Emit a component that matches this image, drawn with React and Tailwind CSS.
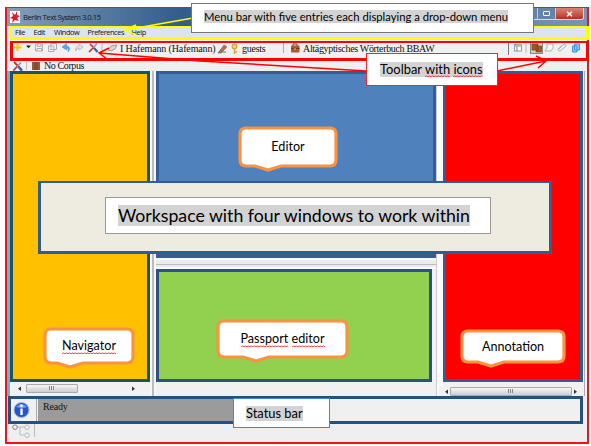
import React from "react";

const SERIF = "font-['Liberation_Serif','Times_New_Roman',serif] text-[10px] leading-[12px] text-[#111]";

function Label({ children, className }) {
  return (
    <span className={`whitespace-nowrap font-['Lato','Liberation_Sans',sans-serif] text-black ${className || ""}`}>
      {children}
    </span>
  );
}

// A word with the spell checker's red zigzag under its baseline.
function Misspelt({ children }) {
  const id = React.useId();
  return (
    <span className="relative inline-block">
      {children}
      <svg className="absolute -bottom-px left-0 h-[3px] w-full">
        <pattern id={id} width="3" height="3" patternUnits="userSpaceOnUse">
          <path d="M0 2.2L1.5 .7L3 2.2" fill="none" stroke="#ff2a2a" strokeWidth="1" />
        </pattern>
        <rect width="100%" height="3" fill={`url(#${id})`} />
      </svg>
    </span>
  );
}

function Bubble({ className, w, h, tip, children }) {
  const r = 6;
  const b = h - 6;
  const d = `M${r + 2} 2H${w - r - 2}Q${w - 2} 2 ${w - 2} ${r + 2}V${b - r}Q${w - 2} ${b} ${w - r - 2} ${b}H${tip + 13}L${tip} ${h - 2}L${tip - 13} ${b}H${r + 2}Q2 ${b} 2 ${b - r}V${r + 2}Q2 2 ${r + 2} 2Z`;
  return (
    <div className={`absolute ${className}`}>
      <svg width={w} height={h} className="block">
        <path d={d} fill="#fff" stroke="#fb923f" strokeWidth="3.2" />
      </svg>
      <div className="absolute inset-x-0 top-0 bottom-[4px] flex items-center justify-center">
        <Label className="text-[12.6px] leading-4">{children}</Label>
      </div>
    </div>
  );
}

function ScrollBar({ thumb }) {
  return (
    <div className="flex h-[10px] items-center bg-[#f1f1f1] px-1">
      <svg width="7" height="7"><path d="M5 1.5V6L2 3.7Z" fill="#333" /></svg>
      <div className={`flex h-[9px] items-center justify-center rounded-[1px] border border-[#aaa] bg-linear-to-b from-[#f6f6f6] to-[#cfcfcf] ${thumb}`}>
        <svg width="6" height="5"><path d="M.5 0V4M2.5 0V4M4.5 0V4" stroke="#888" strokeWidth="1" /></svg>
      </div>
      <svg width="7" height="7" className="ml-auto"><path d="M2 1.5V6L5 3.7Z" fill="#333" /></svg>
    </div>
  );
}

function CrossTools() {
  return (
    <svg width="12" height="11" viewBox="0 0 12 11" className="shrink-0">
      <path d="M2 1L10 9" stroke="#d22c2c" strokeWidth="1.8" />
      <path d="M9 1.5L1.5 9.5" stroke="#7d97bd" strokeWidth="1.6" />
      <path d="M6.5 6L10 10" stroke="#2967b8" strokeWidth="2" />
      <path d="M1.5 9.5L5 5.5" stroke="#d22c2c" strokeWidth="1.4" />
    </svg>
  );
}

function Briefcase() {
  return (
    <svg width="10" height="10" viewBox="0 0 10 10" className="shrink-0">
      <path d="M3 3V1H7V3" fill="none" stroke="#70452b" />
      <rect x="1" y="2.5" width="8.5" height="7" rx=".8" fill="#a65b32" />
      <path d="M1 5.5H9.5" stroke="#713a21" />
      <path d="M5 5V7" stroke="#edc271" />
    </svg>
  );
}

function ToolIcons() {
  return (
    <svg width="108" height="15" viewBox="10 43 108 15" className="shrink-0">
      <path d="M17.5 43.5V51M13.5 47.3H21.5" stroke="#ffc818" strokeWidth="2.2" />
      <path d="M26 45.5H31L28.5 48.3Z" fill="#222" />
      <g fill="#f4f4f4" stroke="#a9adb3">
        <path d="M35.5 44H42.5V51H35.5ZM37.5 44V46.5H41V44M37 51V48.5H41.5V51" />
        <path d="M51 43.5H56.5V49.5H51ZM48.5 46H54V51.5H48.5ZM50 49.5H53" />
      </g>
      <path d="M66.5 43.5L62 47L66.5 50V48Q69 48 68 52Q72 47.5 66.5 45.7Z" fill="#55a9df" stroke="#3e8dc8" strokeWidth=".5" />
      <path d="M79 44L83 47L79 50V48Q76 48 76 51Q74 47 79 46Z" fill="#e4e4e4" stroke="#aaa" strokeWidth=".7" />
      <path d="M90 44L97 51" stroke="#d22c2c" strokeWidth="1.7" />
      <path d="M97 43.5L93 48" stroke="#8aa0c2" strokeWidth="1.7" />
      <path d="M93 48L89 52" stroke="#d22c2c" strokeWidth="1.7" />
      <path d="M94 48L97.5 52" stroke="#2868ba" strokeWidth="2" />
      <path d="M102 43V52" stroke="#bbb" />
      <path d="M108 50L111 46L117 45L115 49L111 51Z" fill="#ddd5c5" stroke="#8d8981" strokeWidth=".8" />
    </svg>
  );
}

function RightIcons() {
  return (
    <svg width="78" height="15" viewBox="507 43 78 15" className="shrink-0">
      <path d="M507.5 43V55" stroke="#777" />
      <rect x="513.5" y="44.5" width="7" height="6.5" fill="#fff" stroke="#8c99a6" />
      <path d="M514 46H520M516 46V51" stroke="#668bb5" />
      <path d="M518 43.5V47M516.5 45H521" stroke="#e5b840" />
      <path d="M525 43V53" stroke="#bbb" />
      <rect x="529.5" y="42.5" width="12" height="11" fill="#ccc" stroke="#888" />
      <path d="M531 44H537V50H531ZM535 46H540.5V52H535Z" fill="#a2572c" stroke="#74391c" strokeWidth=".6" />
      <path d="M546 44H552V48L550 51H544L546 48Z" fill="#fafafa" stroke="#a7b9b7" />
      <path d="M558 49L563 44Q566 44 564 47L559 51Q556 51 558 48L562 45" fill="none" stroke="#a5b5b5" />
      <path d="M573.5 44H578.5V50H573.5ZM571.5 46H576V52H571.5Z" fill="#8fd0f4" stroke="#3796d1" />
    </svg>
  );
}

function Note({ className, children, textClass }) {
  return (
    <div className={`absolute flex items-center bg-white ${className}`}>
      <span className="flex bg-[#d3d3d3]">
        <Label className={textClass}>{children}</Label>
      </span>
    </div>
  );
}

export default function App() {
  return (
    <div className="relative h-[446px] w-[591px] overflow-hidden bg-white pl-[5px] pt-[7px]">
      <div className="flex h-[437px] w-[584px] flex-col border-2 border-t-1 border-[#f51118] bg-[#efefef]">
        <header className="flex h-[18px] shrink-0 items-center bg-linear-to-r from-[#859fb9] via-[#315c8c] via-30% to-[#7794b5] pl-[3px]">
          <svg width="10" height="12" viewBox="0 0 10 12">
            <path d="M0 0H10V12H0Z" fill="#fff" />
            <path d="M2 1L5 4L7 0L7 4L10 5L7 7L9 10L5 9L2 12L3 8L0 7L3 5Z" fill="#df1830" />
          </svg>
          <span className="ml-[3px] whitespace-nowrap font-['Open_Sans','Noto_Sans',sans-serif] text-[7.8px] leading-3 tracking-[-0.54px] text-[#101c2a]">Berlin Text System 3.0.15</span>
          <div className="ml-auto mr-[3px] flex h-[12px] self-start overflow-hidden rounded-b-[3px] border border-t-0 border-[#d0dce8]">
            <div className="flex w-[20px] items-center justify-center bg-[#6584a9]"><i className="mt-1 h-[2px] w-[7px] bg-white" /></div>
            <div className="flex w-[19px] items-center justify-center border-x border-[#bbcadd] bg-[#6584a9]"><i className="h-[5px] w-[7px] rounded-[1px] border border-white" /></div>
            <div className="flex w-[27px] items-center justify-center bg-linear-to-b from-[#d98479] to-[#b92b19]">
              <svg width="7" height="6"><path d="M1 .8L6 5.2M6 .8L1 5.2" stroke="#fff" strokeWidth="1.5" /></svg>
            </div>
          </div>
        </header>

        <nav className="ml-[3px] mr-[-2px] flex h-[14px] shrink-0 items-center border-2 border-b-3 border-r-3 border-[#ffff00] bg-[#dce3f3] pl-[3px] font-['Open_Sans','Noto_Sans',sans-serif] text-[7.4px] leading-[9px] tracking-[-0.42px] text-[#111]">
          <span className="w-[18.5px]">File</span>
          <span className="w-[20.5px]">Edit</span>
          <span className="w-[33.5px]">Window</span>
          <span className="w-[44px]">Preferences</span>
          <span>Help</span>
        </nav>

        <div className={`ml-[3px] mr-[-2px] mt-[1px] flex h-[20px] shrink-0 items-start overflow-hidden border-3 border-t-2 border-[#ff0000] bg-[#f0f0f0] ${SERIF}`}>
          <div className="-ml-[3px] flex w-[108px] shrink-0"><ToolIcons /></div>
          <span className="ml-[2px] w-[97px] shrink-0 whitespace-nowrap tracking-[-0.13px]">I Hafemann (Hafemann)</span>
          <svg width="24" height="12" viewBox="0 0 24 12" className="shrink-0">
            <path d="M1 10L7 2L10 4L4 10Z" fill="#b56c58" stroke="#775b4c" strokeWidth=".6" />
            <path d="M2 9L9 9" stroke="#4e8c52" />
            <circle cx="17.5" cy="3.5" r="2.5" fill="#f5ce64" stroke="#c69327" />
            <path d="M17.5 6V11M17.5 9H20" stroke="#d7a53c" strokeWidth="1.5" />
          </svg>
          <span className="ml-[1px] w-[41px] shrink-0 tracking-[-0.25px]">guests</span>
          <div className="mr-[6px] h-[10px] w-px shrink-0 bg-[#aaa]" />
          <Briefcase />
          <span className="ml-[3px] whitespace-nowrap tracking-[-0.33px]">Altägyptisches Wörterbuch BBAW</span>
          <div className="ml-auto"><RightIcons /></div>
        </div>

        <div className={`flex h-[10px] shrink-0 items-center pl-[5px] ${SERIF}`}>
          <CrossTools />
          <div className="ml-[2px] mr-[5px] h-2 w-px bg-[#bbb]" />
          <svg width="9" height="9"><path d="M0 0H8V8H0Z" fill="#9d5732" /><path d="M3 0V8M5 0V8" stroke="#704022" /></svg>
          <span className="ml-[3px] tracking-[-0.4px]">No Corpus</span>
        </div>

        <main className="flex h-[325px] shrink-0 border-l-3 border-[#61b8d2] bg-[#f1f1f1]">
          <section className="w-[140px] shrink-0">
            <div className="h-[311px] border-3 border-[#1d5260] bg-[#ffc000]" />
            <div className="mt-[1px] mr-[9px] ml-[2px]"><ScrollBar thumb="ml-[3px] w-[52px]" /></div>
          </section>
          <div className="w-[6px] shrink-0 border-x-2 border-[#f7f7f7] bg-[#bbbcc2]" />
          <section className="flex w-[280px] shrink-0 flex-col">
            <div className="h-[187px] border-3 border-b-4 border-[#345e95] bg-[#4f81bd]" />
            <div className="h-[11px] border-y-2 border-[#fafafa] bg-[#ececec]"><div className="mt-[4px] h-px bg-[#bcbcbc]" /></div>
            <div className="h-[113px] w-[276px] border-3 border-[#2c5182] bg-[#92d050]" />
          </section>
          <div className="w-[7px] shrink-0 border-l border-[#ccc] bg-[#fafafa]" />
          <section className="w-[140px] shrink-0">
            <div className="h-[311px] border-3 border-[#2e5f8f] bg-[#ff0000]" />
            <div className="-ml-[4px] mt-[4px]"><ScrollBar thumb="ml-[0px] w-[123px]" /></div>
          </section>
          <div className="ml-[1px] w-px bg-[#aaa]" />
        </main>

        <footer className="ml-[1px] flex h-[28px] w-[575px] shrink-0 border-3 border-[#27507f] bg-[#f0f0f0]">
          <div className="flex w-[26px] items-center border-r border-[#aaa] pl-[2px]">
            <svg width="17" height="18" viewBox="0 0 17 18">
              <circle cx="8.5" cy="9" r="7.5" fill="#2455cf" stroke="#a5b6d7" />
              <path d="M3 6Q8 0 14 6Q9 8 3 6" fill="#7299ed" />
              <path d="M8.5 7.5V14" fill="none" stroke="#fff" strokeWidth="2.4" />
              <circle cx="8.5" cy="4.8" r="1.4" fill="#fff" />
            </svg>
          </div>
          <div className={`ml-[1px] w-[196px] bg-[#9b9b9b] pl-[5px] pt-[2px] tracking-[-0.2px] ${SERIF}`}>Ready</div>
        </footer>
        <div className="flex h-[16px] items-start pl-[4px]">
          <svg width="21" height="16" viewBox="0 0 21 16" fill="none" stroke="#bbb">
            <path d="M6 3H14M9 3V11H13" />
            <circle cx="4" cy="3.2" r="2.3" stroke="#888" />
            <circle cx="16" cy="3.2" r="2.3" />
            <circle cx="16" cy="11.2" r="2.3" />
          </svg>
          <div className="ml-[2px] h-[13px] w-px bg-[#bbb]" />
        </div>
      </div>

      <svg className="absolute left-0 top-0" width="591" height="100" fill="none">
        <path d="M193 18L125 30M136 25L124 30L136 35" stroke="#ffff00" strokeWidth="1.7" />
        <path d="M366 71L200 61L99 53M109 48L99 53L107 59" stroke="#ff0000" strokeWidth="1.5" />
        <path d="M497 71L546 61M536 56L546 61L538 68" stroke="#ff0000" strokeWidth="1.5" />
      </svg>
      <Note className="left-[191px] top-[3px] h-[30px] w-[343px] border border-[#777] pb-[3px] pl-[12px]" textClass="text-[11.25px] leading-[13px]">Menu bar with five entries each displaying a drop-down menu</Note>
      <Note className="left-[366px] top-[53px] h-[33px] w-[132px] border border-[#ff2020] pb-[1px] pl-[13px]" textClass="text-[12.9px] leading-[15px]">
        Toolbar <Misspelt>with</Misspelt> <Misspelt>icons</Misspelt>
      </Note>
      <div className="absolute left-[38px] top-[181px] h-[73px] w-[514px] border-3 border-t-2 border-[#315d92] bg-[#eeece1]" />
      <Note className="left-[105px] top-[197px] h-[37px] w-[386px] border border-[#999] pl-[12px]" textClass="text-[17.7px] leading-[21px]">Workspace with four windows to work within</Note>
      <Note className="left-[233px] top-[398px] h-[30px] w-[97px] border border-[#4289c5] pl-[12px]" textClass="text-[12.9px] leading-[15px]">Status bar</Note>
      <Bubble className="left-[238px] top-[126px]" w={100} h={46} tip={30}>Editor</Bubble>
      <Bubble className="left-[43px] top-[327px]" w={92} h={42} tip={27}><Misspelt>Navigator</Misspelt></Bubble>
      <Bubble className="left-[216px] top-[319px]" w={133} h={44} tip={40}><Misspelt>Passport</Misspelt> <Misspelt>editor</Misspelt></Bubble>
      <Bubble className="left-[460px] top-[329px]" w={106} h={39} tip={31}>Annotation</Bubble>
    </div>
  );
}
